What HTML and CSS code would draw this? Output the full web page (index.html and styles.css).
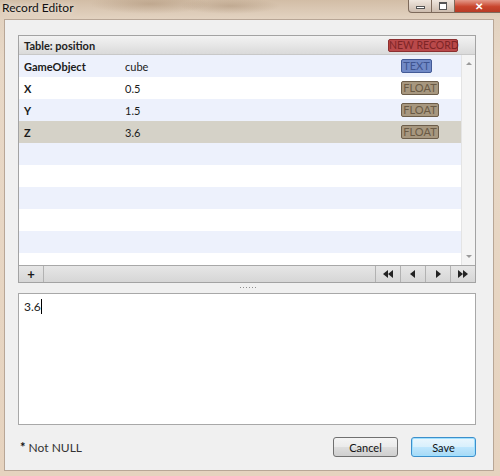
FILE: index.html
```html
<!DOCTYPE html>
<html lang="en">
<head>
  <meta charset="UTF-8" />
  <title>Record Editor</title>
  <link rel="stylesheet" href="styles.css">
</head>
<body>
  <div class="window">
    <div class="titlebar">
      <span class="title">Record Editor</span>
      <div class="controls">
        <span class="ctl ctl-min"><i></i></span>
        <span class="ctl ctl-max"><i></i></span>
        <span class="ctl ctl-close">&#x2715;</span>
      </div>
    </div>

    <div class="client">
      <section class="panel">
        <header class="panel-head">
          <span class="table-name">Table: position</span>
          <span class="badge badge-new">NEW RECORD</span>
        </header>

        <div class="panel-body">
          <div class="rows">
            <div class="row alt"><b>GameObject</b><span>cube</span><span class="badge badge-text">TEXT</span></div>
            <div class="row"><b>X</b><span>0.5</span><span class="badge badge-float">FLOAT</span></div>
            <div class="row alt"><b>Y</b><span>1.5</span><span class="badge badge-float">FLOAT</span></div>
            <div class="row selected"><b>Z</b><span>3.6</span><span class="badge badge-float">FLOAT</span></div>
            <div class="row alt"></div>
            <div class="row"></div>
            <div class="row alt"></div>
            <div class="row"></div>
            <div class="row alt"></div>
            <div class="row"></div>
          </div>
          <div class="scrollbar">
            <svg width="14" height="14" viewBox="0 0 14 14"><polygon points="4,9 10,9 7,6" fill="#9a9a9a"/></svg>
            <svg width="14" height="14" viewBox="0 0 14 14"><polygon points="4,5 10,5 7,8" fill="#9a9a9a"/></svg>
          </div>
        </div>

        <footer class="toolbar">
          <span class="tbtn add">+</span>
          <div class="nav">
            <span class="tbtn">
              <svg width="12" height="8" viewBox="0 0 12 8"><polygon points="6,0 6,8 1,4" fill="#222"/><polygon points="11,0 11,8 6,4" fill="#222"/></svg>
            </span>
            <span class="tbtn">
              <svg width="8" height="8" viewBox="0 0 8 8"><polygon points="6,0 6,8 1,4" fill="#222"/></svg>
            </span>
            <span class="tbtn">
              <svg width="8" height="8" viewBox="0 0 8 8"><polygon points="2,0 2,8 7,4" fill="#222"/></svg>
            </span>
            <span class="tbtn">
              <svg width="12" height="8" viewBox="0 0 12 8"><polygon points="1,0 1,8 6,4" fill="#222"/><polygon points="6,0 6,8 11,4" fill="#222"/></svg>
            </span>
          </div>
        </footer>
      </section>

      <div class="splitter"><span class="grip"></span></div>

      <div class="editor">3.6<span class="caret"></span></div>

      <div class="footer">
        <span class="note"><b>*</b> Not NULL</span>
        <div class="actions">
          <button class="btn">Cancel</button>
          <button class="btn btn-default">Save</button>
        </div>
      </div>
    </div>
  </div>
</body>
</html>
```

FILE: styles.css
```css
* {
  box-sizing: border-box;
  margin: 0;
  padding: 0;
}

body {
  width: 500px;
  height: 476px;
  overflow: hidden;
  font-family: Lato, "Open Sans", sans-serif;
  font-size: 11px;
  color: #1a1a1a;
}

/* Marco de la ventana */
.window {
  height: 476px;
  display: flex;
  flex-direction: column;
  background:
    radial-gradient(ellipse 60px 10px at 150px 4px, rgba(150, 120, 90, 0.35), transparent),
    radial-gradient(ellipse 50px 8px at 230px 6px, rgba(140, 110, 80, 0.3), transparent),
    linear-gradient(180deg, #d2bda6 0px, #e2d2c0 18px, #e8d8c6 60px, #e6d3bf 100%);
}

.titlebar {
  height: 19px;
  display: flex;
  justify-content: space-between;
  align-items: flex-start;
}
.title {
  font-size: 12px;
  line-height: 14px;
  padding: 1px 0 0 2px;
  color: #111;
  text-shadow: 0 0 6px rgba(255, 255, 255, 0.9);
}
.controls {
  display: flex;
  height: 13px;
  margin-right: -4px;
}
.ctl {
  height: 13px;
  border: 1px solid #7d6a5b;
  border-top: none;
  display: flex;
  align-items: center;
  justify-content: center;
  background: linear-gradient(180deg, #efe6de, #cdbcae);
}
.ctl-min {
  width: 24px;
  border-radius: 0 0 0 4px;
}
.ctl-min i {
  width: 9px;
  height: 3px;
  margin-top: 3px;
  border: 1px solid #555;
  background: #fff;
}
.ctl-max {
  width: 23px;
  border-left: none;
}
.ctl-max i {
  width: 8px;
  height: 8px;
  border: 1px solid #555;
  border-top-width: 2px;
  background: #fff;
}
.ctl-close {
  width: 49px;
  border-left: none;
  background: linear-gradient(180deg, #e49a8a, #c9462e 55%, #b83a24);
  color: #fff;
  font-size: 10px;
  font-weight: 700;
  line-height: 1;
}

/* Área de cliente */
.client {
  flex: 1;
  margin: 0 6px 5px 4px;
  border: 1px solid #b8a696;
  background: #f0f0f0;
  padding: 15px 17px 0 13px;
  display: flex;
  flex-direction: column;
}

.panel {
  height: 248px;
  border: 1px solid #a3a3a3;
  background: #fff;
  display: flex;
  flex-direction: column;
}

.panel-head {
  height: 19px;
  flex-shrink: 0;
  display: flex;
  align-items: center;
  justify-content: space-between;
  padding: 0 17px 0 5px;
  background: linear-gradient(180deg, #f3f3f3, #dadada);
  border-bottom: 1px solid #c8c8c8;
}
.table-name {
  font-weight: 700;
  font-size: 11px;
  color: #222;
}

.badge {
  display: inline-block;
  height: 14px;
  line-height: 12px;
  font-size: 11px;
  text-align: center;
  white-space: nowrap;
  border: 1px solid;
  border-radius: 2px;
}
.badge-new {
  width: 70px;
  height: 13px;
  line-height: 11px;
  font-size: 10.5px;
  background: #b9494a;
  border-color: #8c2f30;
  color: #7e2526;
}
.badge-text {
  width: 31px;
  background: #7089c6;
  border-color: #435a96;
  color: #3f5490;
}
.badge-float {
  width: 38px;
  background: #a7977f;
  border-color: #6c5d4a;
  color: #6a5a45;
}

.panel-body {
  flex: 1;
  display: flex;
  overflow: hidden;
}
.rows {
  flex: 1;
  overflow: hidden;
}
.row {
  height: 22px;
  display: grid;
  grid-template-columns: 101px 276px auto;
  align-items: center;
  padding-left: 5px;
  background: #fff;
  font-size: 11px;
}
.row b {
  font-weight: 700;
}
.row.alt {
  background: #edf1fc;
}
.row.selected {
  background: #d5d2c8;
}

.scrollbar {
  width: 14px;
  display: flex;
  flex-direction: column;
  justify-content: space-between;
  background: #f4f4f4;
  border-left: 1px solid #e4e4e4;
  padding: 1px 0;
}

.toolbar {
  height: 17px;
  flex-shrink: 0;
  display: flex;
  justify-content: space-between;
  background: linear-gradient(180deg, #e6e6e6, #d6d6d6);
  border-top: 1px solid #a8a8a8;
}
.nav {
  display: flex;
}
.tbtn {
  width: 25px;
  display: flex;
  align-items: center;
  justify-content: center;
  border-left: 1px solid #b2b2b2;
}
.tbtn.add {
  border-left: none;
  border-right: 1px solid #b2b2b2;
  font-weight: 700;
  font-size: 13px;
  line-height: 1;
}

.splitter {
  height: 10px;
  display: flex;
  justify-content: center;
  padding-top: 4px;
}
.grip {
  width: 17px;
  height: 1px;
  margin-left: 3px;
  background: repeating-linear-gradient(90deg, #8f8f8f 0 1px, transparent 1px 3px);
}

.editor {
  height: 132px;
  border: 1px solid #a8a8a8;
  background: #fff;
  padding: 4px 5px;
  font-size: 12px;
  line-height: 18px;
  color: #222;
}
.caret {
  display: inline-block;
  width: 1px;
  height: 15px;
  background: #000;
  vertical-align: -3px;
}

.footer {
  flex: 1;
  display: flex;
  justify-content: space-between;
  align-items: flex-start;
  padding: 12px 0 0 2px;
}
.note {
  margin-top: 2px;
  font-size: 12px;
  color: #333;
}
.note b {
  font-size: 13px;
  color: #111;
}
.actions {
  display: flex;
  gap: 13px;
}
.btn {
  width: 65px;
  height: 20px;
  font-family: Lato, "Open Sans", sans-serif;
  font-size: 11px;
  color: #111;
  border: 1px solid #707070;
  border-radius: 3px;
  background: linear-gradient(180deg, #f4f4f4 0%, #ebebeb 48%, #dddddd 52%, #cfcfcf 100%);
}
.btn-default {
  border-color: #3c8fcb;
  background: linear-gradient(180deg, #eaf6fd 0%, #d9f0fc 48%, #bee6fd 52%, #a7d9f5 100%);
  box-shadow: inset 0 0 0 1px #9fe0ff;
}
```
